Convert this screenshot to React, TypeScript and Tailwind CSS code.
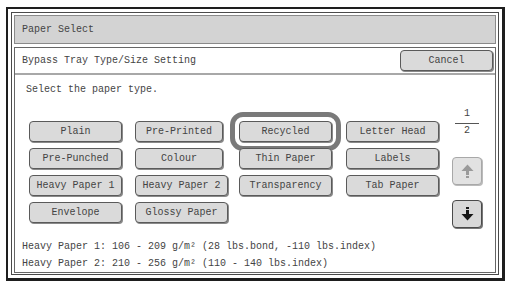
const font = { fontFamily: '"Liberation Mono", "DejaVu Sans Mono", monospace' };

interface PaperButton {
  label: string;
  width: string;
  selected?: boolean;
}

const rows: PaperButton[][] = [
  [
    { label: 'Plain', width: 'w-[93px]' },
    { label: 'Pre-Printed', width: 'w-[88px]' },
    { label: 'Recycled', width: 'w-[93px]', selected: true },
    { label: 'Letter Head', width: 'w-[93px]' },
  ],
  [
    { label: 'Pre-Punched', width: 'w-[93px]' },
    { label: 'Colour', width: 'w-[88px]' },
    { label: 'Thin Paper', width: 'w-[93px]' },
    { label: 'Labels', width: 'w-[93px]' },
  ],
  [
    { label: 'Heavy Paper 1', width: 'w-[93px]' },
    { label: 'Heavy Paper 2', width: 'w-[93px]' },
    { label: 'Transparency', width: 'w-[93px]' },
    { label: 'Tab Paper', width: 'w-[93px]' },
  ],
  [
    { label: 'Envelope', width: 'w-[93px]' },
    { label: 'Glossy Paper', width: 'w-[93px]' },
  ],
];

function ArrowIcon({ down, color }: { down?: boolean; color: string }) {
  return (
    <svg width="13" height="14" viewBox="0 0 13 14" className={down ? '' : 'rotate-180'}>
      <rect x="5" y="0" width="3" height="2" fill={color} />
      <rect x="5" y="3" width="3" height="4" fill={color} />
      <polygon points="0.5,7 12.5,7 6.5,13.5" fill={color} />
    </svg>
  );
}

export default function App() {
  return (
    <div className="w-[509px] h-[285px] bg-white pt-[7px] pl-[6px] text-[10px] text-[#444]" style={font}>
      {/* Outer frame */}
      <div className="w-[499px] h-[274px] border-t-2 border-l-2 border-r-[3px] border-b-[3px] border-[#1e1e1e] p-[3px]">
        <div className="h-full border border-[#4a4a4a] p-[2px] flex flex-col gap-[3px]">
          {/* Title bar */}
          <div className="h-[29px] shrink-0 border border-[#8a8a8a] bg-[#d3d3d3] flex items-center pl-[7px] leading-[12px]">
            Paper Select
          </div>

          {/* Main panel */}
          <div className="flex-1 border border-[#666] flex flex-col">
            <div className="h-[27px] shrink-0 flex items-center justify-between pl-[7px] pr-[2px] border-b-2 border-[#a8a8a8]">
              <span className="leading-[12px]">Bypass Tray Type/Size Setting</span>
              <button className="w-[93px] h-[21px] rounded-[4px] border border-[#5a5a5a] bg-[#dadada] shadow-[1px_1px_0_#8a8a8a] leading-[12px]">
                Cancel
              </button>
            </div>

            <div className="flex flex-1">
              <div className="flex flex-col">
                <p className="pl-[11px] pt-[9px] leading-[12px]">Select the paper type.</p>

                <div className="ml-[14px] mt-[25px] grid grid-cols-[106px_104px_107px_93px] gap-y-[6px]">
                  {rows.flat().map((b) => (
                    <div key={b.label}>
                      <button
                        className={`${b.width} h-[21px] rounded-[4px] border border-[#5a5a5a] bg-[#dadada] shadow-[1px_1px_0_#8a8a8a] leading-[12px] ${
                          b.selected ? 'outline-[5px] outline-solid outline-[#7a7a7a] outline-offset-[4px]' : ''
                        }`}
                      >
                        {b.label}
                      </button>
                    </div>
                  ))}
                </div>

                <div className="pl-[7px] mt-[15px] leading-[17px]">
                  <p>Heavy Paper 1: 106 - 209 g/m² (28 lbs.bond, -110 lbs.index)</p>
                  <p>Heavy Paper 2: 210 - 256 g/m² (110 - 140 lbs.index)</p>
                </div>
              </div>

              {/* Page navigation */}
              <div className="ml-auto mr-[13px] w-[30px] flex flex-col items-center">
                <span className="mt-[33px] leading-[12px]">1</span>
                <div className="mt-[3px] w-[24px] h-px bg-[#555]" />
                <span className="leading-[12px] mt-[1px]">2</span>
                <button className="mt-[20px] w-[30px] h-[28px] rounded-[4px] border border-[#a8a8a8] bg-[#e2e2e2] shadow-[1px_1px_0_#bbb] flex items-center justify-center">
                  <ArrowIcon color="#9a9a9a" />
                </button>
                <button className="mt-[15px] w-[30px] h-[28px] rounded-[4px] border border-[#4a4a4a] bg-[#d8d8d8] shadow-[1px_1px_0_#777] flex items-center justify-center">
                  <ArrowIcon down color="#151515" />
                </button>
              </div>
            </div>
          </div>
        </div>
      </div>
    </div>
  );
}
